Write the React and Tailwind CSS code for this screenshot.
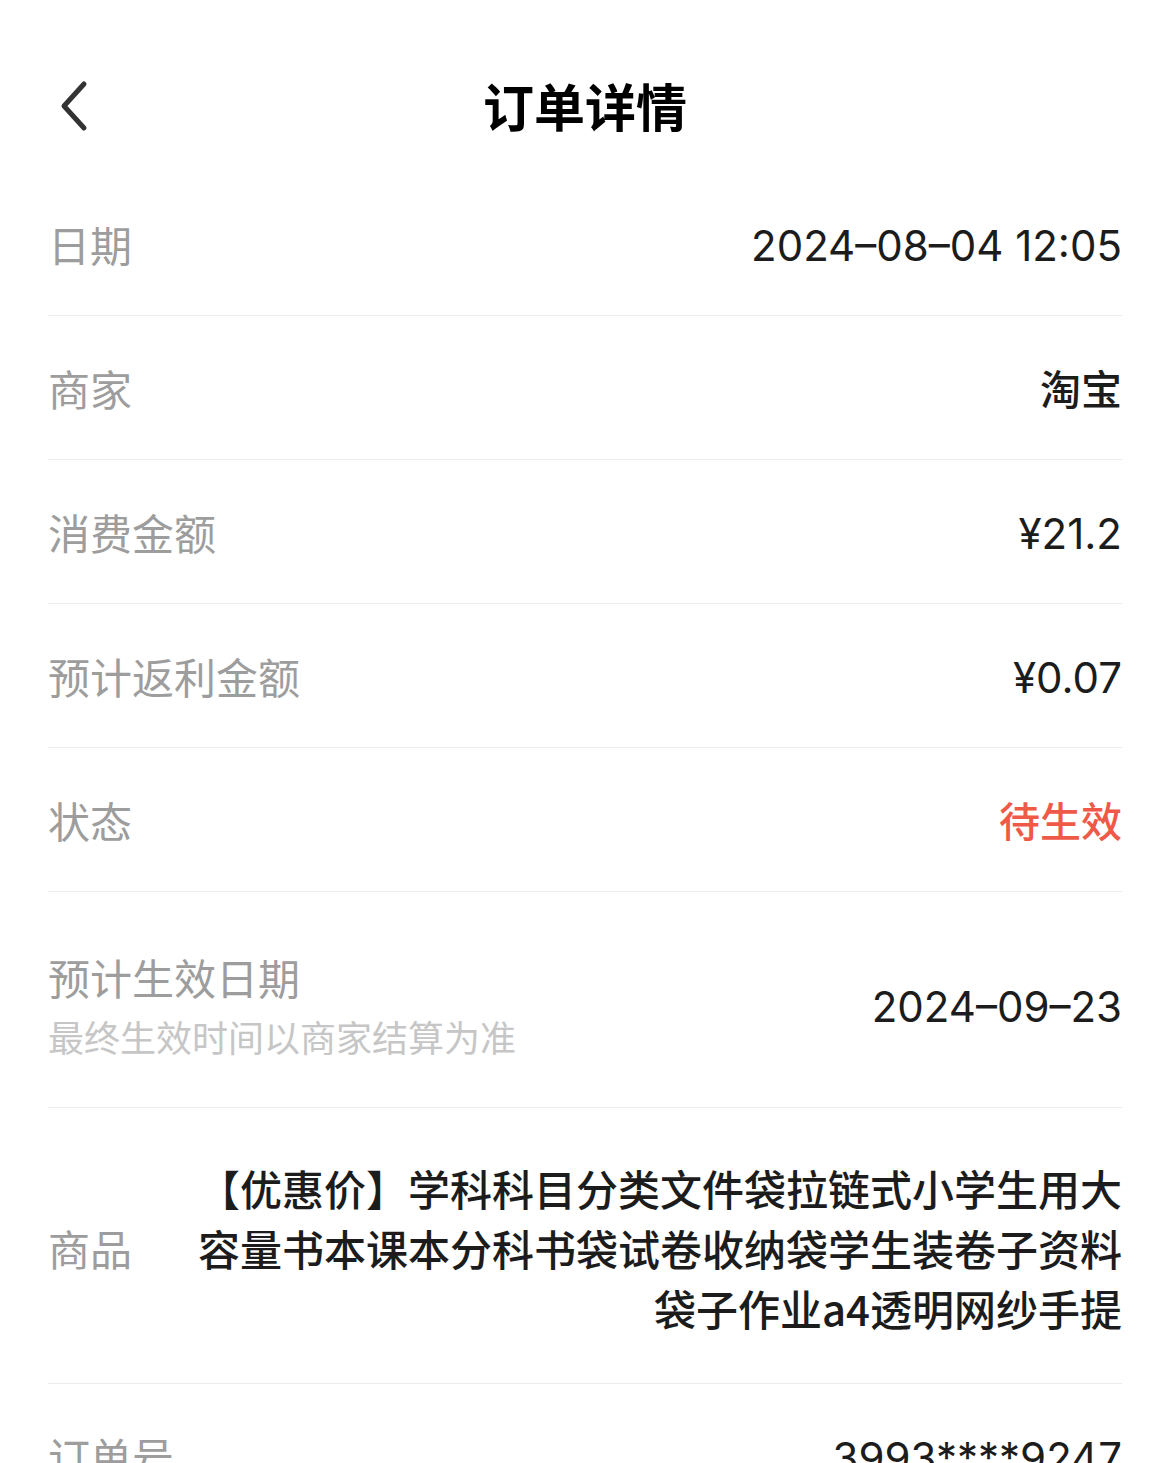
import React from "react";

const cjk = { fontFamily: '"Noto Sans CJK SC", "Noto Sans", sans-serif' };
const num = { fontFamily: 'Inter, "Noto Sans CJK SC", sans-serif' };

function Row({ label, children }) {
  return (
    <div className="flex h-[144px] items-center justify-between border-b border-[#ececec]">
      <div className="text-[42px] leading-none text-[#9d9d9d]" style={cjk}>{label}</div>
      {children}
    </div>
  );
}

function Num({ children }) {
  return (
    <div className="mt-[5px] text-[42px] font-normal leading-none text-[#1c1c1c]" style={num}>{children}</div>
  );
}

export default function App() {
  return (
    <div className="min-h-[1463px] w-[1170px] overflow-hidden bg-white" style={cjk}>
      <div className="relative flex h-[172px] items-start justify-center pt-[70px]">
        <svg className="absolute left-[56px] top-[78px]" width="36" height="56" viewBox="0 0 36 56">
          <path d="M28 6 L8 28 L28 50" fill="none" stroke="#333" strokeWidth="5" strokeLinecap="round" strokeLinejoin="round" />
        </svg>
        <div className="text-[51px] font-bold leading-[70px] text-black">订单详情</div>
      </div>
      <div className="mx-[48px]">
        <Row label="日期">
          <Num>2024–08–04 12:05</Num>
        </Row>
        <Row label="商家">
          <div className="text-[41px] font-medium leading-none text-[#1c1c1c]">淘宝</div>
        </Row>
        <Row label="消费金额">
          <Num>¥21.2</Num>
        </Row>
        <Row label="预计返利金额">
          <Num>¥0.07</Num>
        </Row>
        <Row label="状态">
          <div className="text-[41px] font-medium leading-none text-[#ef5a48]">待生效</div>
        </Row>
        <div className="flex items-center justify-between border-b border-[#ececec] pt-[57px] pb-[47px]">
          <div className="flex flex-col gap-[7px]">
            <div className="text-[42px] leading-[56px] text-[#9d9d9d]">预计生效日期</div>
            <div className="text-[36px] leading-[48px] text-[#c6c6c6]">最终生效时间以商家结算为准</div>
          </div>
          <Num>2024–09–23</Num>
        </div>
        <div className="flex items-center border-b border-[#ececec] pt-[50px] pb-[45px]">
          <div className="w-[84px] shrink-0 text-[42px] leading-none text-[#9d9d9d]">商品</div>
          <div className="ml-[48px] flex-1 text-right text-[42px] font-medium leading-[60px] text-[#1c1c1c]">
            【优惠价】学科科目分类文件袋拉链式小学生用大容量书本课本分科书袋试卷收纳袋学生装卷子资料袋子作业a4透明网纱手提
          </div>
        </div>
        <Row label="订单号">
          <Num>3993****9247</Num>
        </Row>
      </div>
    </div>
  );
}
